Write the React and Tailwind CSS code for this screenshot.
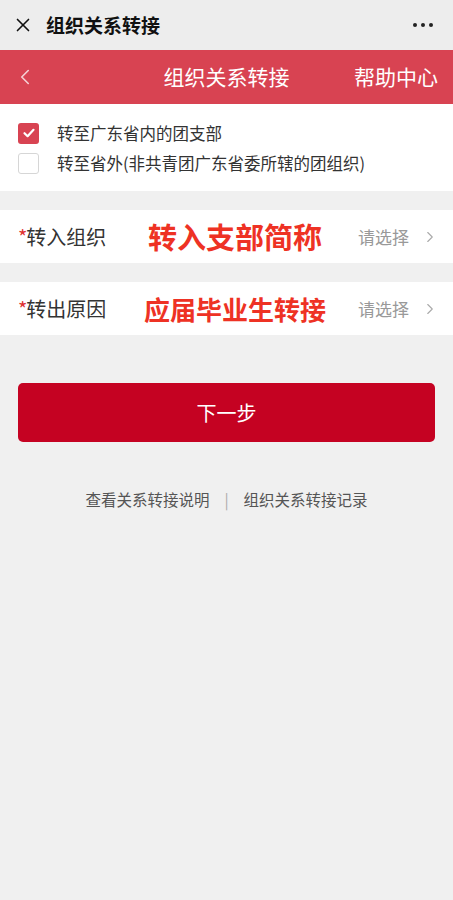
import { ChevronLeft, ChevronRight, X } from "lucide-react";

const font = { fontFamily: '"Noto Sans CJK SC", "Noto Sans", sans-serif' };

function Row({ label, overlay, size }) {
  return (
    <div className="h-[53px] bg-white flex items-center pl-[18px] pr-[14px]">
      <div className="w-[126px] text-[20px] text-[#333] flex items-center">
        <span className="text-[#e0302f] -mr-[1px]">*</span>
        <span>{label}</span>
      </div>
      <div className={"flex-1 font-bold text-[#ee3224] leading-none " + size}>{overlay}</div>
      <div className="text-[17px] text-[#999] mr-[12px]">请选择</div>
      <ChevronRight size={18} strokeWidth={1.5} className="text-[#aaa]" />
    </div>
  );
}

export default function App() {
  return (
    <div className="min-h-[900px] bg-[#f0f0f0]" style={font}>
      <div className="h-[50px] bg-[#ededed] flex items-center px-[12px]">
        <X size={22} strokeWidth={1.8} className="text-[#111]" />
        <div className="ml-[12px] text-[19px] font-bold text-[#111]">组织关系转接</div>
        <div className="ml-auto mr-[8px] flex gap-[4px]">
          <span className="w-[4px] h-[4px] rounded-full bg-[#222]" />
          <span className="w-[4px] h-[4px] rounded-full bg-[#222]" />
          <span className="w-[4px] h-[4px] rounded-full bg-[#222]" />
        </div>
      </div>

      <div className="h-[54px] bg-[#d84352] grid grid-cols-[1fr_auto_1fr] items-center px-[12px] text-white">
        <ChevronLeft size={26} strokeWidth={1.5} className="text-[#f5d0d4]" />
        <div className="text-[21px]">组织关系转接</div>
        <div className="text-[21px] justify-self-end mr-[3px]">帮助中心</div>
      </div>

      <div className="bg-white h-[87px] pt-[18px] pl-[18px] text-[16.5px] text-[#333]">
        <div className="flex items-center h-[22px]">
          <div className="w-[21px] h-[21px] rounded-[3px] bg-[#d84352] flex items-center justify-center">
            <svg width="14" height="14" viewBox="0 0 14 14" fill="none">
              <path d="M2.5 7.2 L5.6 10.2 L11.5 3.8" stroke="white" strokeWidth="2.2" strokeLinecap="round" strokeLinejoin="round" />
            </svg>
          </div>
          <span className="ml-[18px]">转至广东省内的团支部</span>
        </div>
        <div className="flex items-center h-[22px] mt-[8px]">
          <div className="w-[21px] h-[21px] rounded-[3px] border border-[#d6d6d6] bg-white" />
          <span className="ml-[18px]">转至省外(非共青团广东省委所辖的团组织)</span>
        </div>
      </div>

      <div className="h-[19px]" />
      <Row label="转入组织" overlay="转入支部简称" size="text-[29px] ml-[4px]" />
      <div className="h-[19px]" />
      <Row label="转出原因" overlay="应届毕业生转接" size="text-[26px] ml-[0px]" />

      <div className="px-[18px] pt-[48px]">
        <div className="h-[59px] rounded-[5px] bg-[#c50222] flex items-center justify-center text-white text-[20px]">
          下一步
        </div>
      </div>

      <div className="mt-[46px] flex items-center justify-center text-[15.5px] text-[#555]">
        <span>查看关系转接说明</span>
        <span className="mx-[15px] text-[#aaa]">|</span>
        <span>组织关系转接记录</span>
      </div>
    </div>
  );
}
